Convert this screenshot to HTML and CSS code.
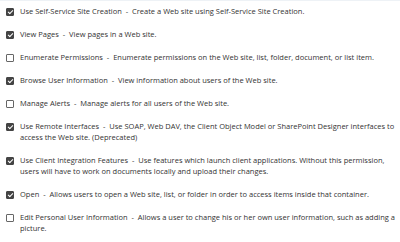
FILE: index.html
```html
<!DOCTYPE html>
<html lang="en">
<head>
    <meta charset="UTF-8">
    <title>Permissions</title>
    <link rel="stylesheet" href="styles.css">
</head>
<body>
    <ul class="perm-list">
        <li class="perm"><span class="box checked"></span><p class="perm-text">Use Self-Service Site Creation &nbsp;-&nbsp; Create a Web site using Self-Service Site Creation.</p></li>
        <li class="perm"><span class="box checked"></span><p class="perm-text">View Pages &nbsp;-&nbsp; View pages in a Web site.</p></li>
        <li class="perm"><span class="box"></span><p class="perm-text">Enumerate Permissions &nbsp;-&nbsp; Enumerate permissions on the Web site, list, folder, document, or list item.</p></li>
        <li class="perm"><span class="box checked"></span><p class="perm-text">Browse User Information &nbsp;-&nbsp; View information about users of the Web site.</p></li>
        <li class="perm"><span class="box"></span><p class="perm-text">Manage Alerts &nbsp;-&nbsp; Manage alerts for all users of the Web site.</p></li>
        <li class="perm"><span class="box checked"></span><p class="perm-text">Use Remote Interfaces &nbsp;-&nbsp; Use SOAP, Web DAV, the Client Object Model or SharePoint Designer interfaces to access the Web site. (Deprecated)</p></li>
        <li class="perm"><span class="box checked"></span><p class="perm-text">Use Client Integration Features &nbsp;-&nbsp; Use features which launch client applications. Without this permission, users will have to work on documents locally and upload their changes.</p></li>
        <li class="perm"><span class="box checked"></span><p class="perm-text">Open &nbsp;-&nbsp; Allows users to open a Web site, list, or folder in order to access items inside that container.</p></li>
        <li class="perm"><span class="box"></span><p class="perm-text">Edit Personal User Information &nbsp;-&nbsp; Allows a user to change his or her own user information, such as adding a picture.</p></li>
    </ul>
</body>
</html>
```

FILE: styles.css
```css
body {
    margin: 0;
    background: #fff;
    font-family: "Open Sans", "Noto Sans", sans-serif;
    font-size: 7.5px;
    color: #333;
    border-top: 1px solid #eef2f6;
}
.perm-list {
    list-style: none;
    margin: 0;
    padding: 5px 4px 0 6px;
    display: flex;
    flex-direction: column;
    gap: 12px;
}
.perm {
    display: flex;
    align-items: flex-start;
    line-height: 11px;
}
.perm-text {
    margin: 0;
}
.box {
    flex: none;
    width: 6px;
    height: 6px;
    margin: 2px 6px 0 0;
    border: 1px solid #666;
    border-radius: 1px;
    background: #fff;
    position: relative;
}
.box.checked {
    background: #444;
    border-color: #444;
}
.box.checked::after {
    content: "";
    position: absolute;
    left: 1.5px;
    top: 0;
    width: 2px;
    height: 4px;
    border: solid #fff;
    border-width: 0 1px 1px 0;
    transform: rotate(45deg);
}
```
